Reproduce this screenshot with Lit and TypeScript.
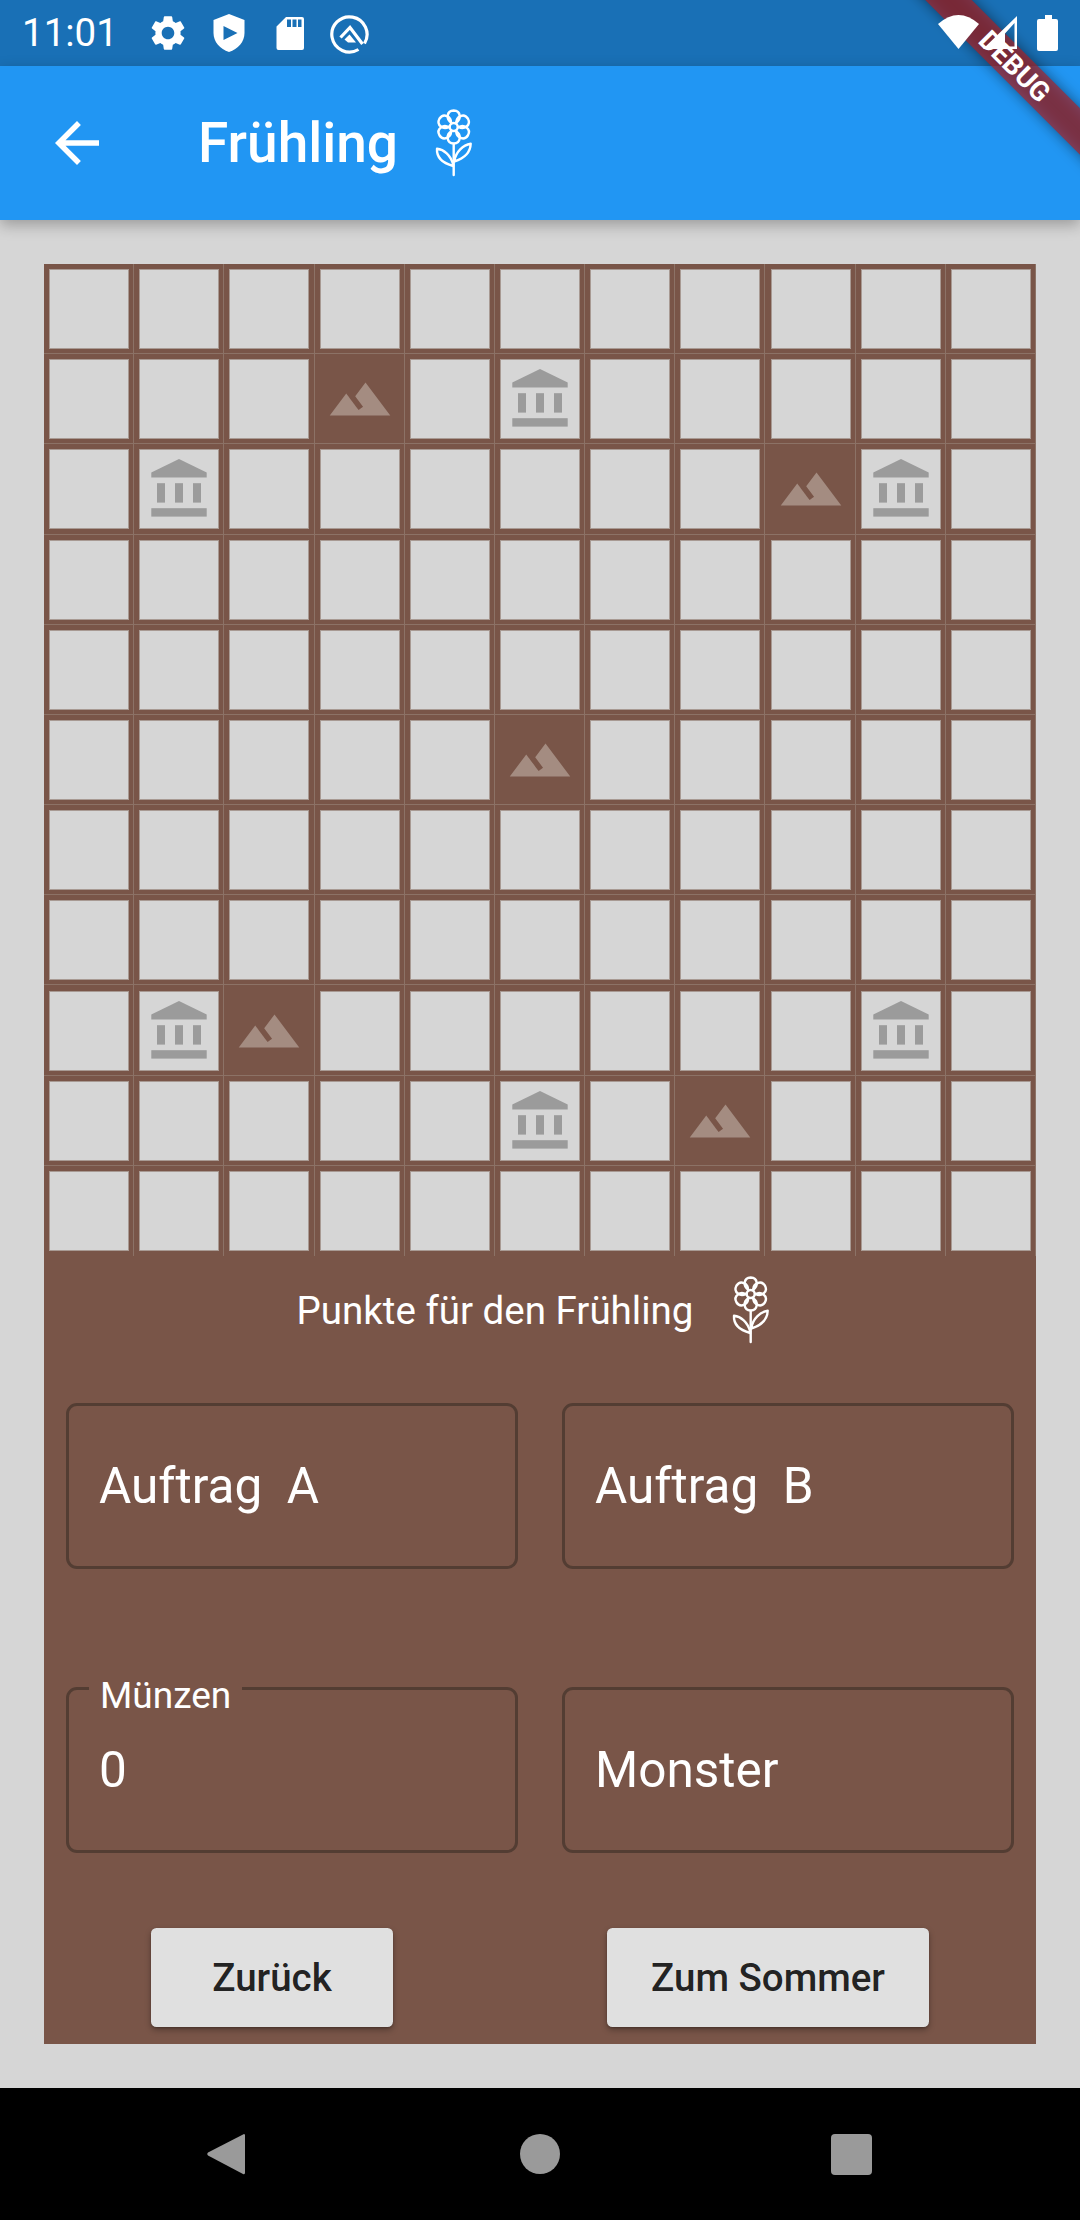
import { LitElement, html, css, svg } from "lit";
import { customElement } from "lit/decorators.js";

const SIZE = 11;
// row,col of the special tiles
const MOUNTAINS = ["1,3", "2,8", "5,5", "8,2", "9,7"];
const RUINS = ["1,5", "2,1", "2,9", "8,1", "8,9", "9,5"];

const flower = html`<svg class="flower" viewBox="0 0 70 85" width="70" height="85" fill="none" stroke="#fff" stroke-width="2.4" stroke-linecap="round" stroke-linejoin="round">
  <g transform="translate(33.7 26)">
    ${[0, 60, 120, 180, 240, 300].map(
      (a) => svg`<path transform="rotate(${a})" d="M-2.2 -4.4C-7.6 -7 -7.6 -16.2 0 -16.5C7.6 -16.2 7.6 -7 2.2 -4.4" />`
    )}
    <circle r="4" />
  </g>
  <path d="M33.7 43V74" />
  <path d="M33.2 63.5C30.5 54 24 48.5 17 47.8C16.5 56 22 62 33.2 65" />
  <path d="M34.2 60C36 50.5 43 44 50.7 42.8C50.4 51.5 44 57.5 34.2 60.5" />
</svg>`;

const mountain = html`<svg viewBox="0 0 24 24" width="66" height="66"><path fill="#a48c81" d="M14 6l-3.75 5 2.85 3.8-1.6 1.2C9.81 13.75 7 10 7 10l-6 8h22L14 6z" /></svg>`;

const bank = html`<svg viewBox="0 0 66 66" width="66" height="66" fill="#9b9b9b">
  <path d="M33 2.9L60.7 16.5V21.5H5.3V16.5Z" />
  <rect x="11" y="27.2" width="8" height="19.4" />
  <rect x="29" y="27.2" width="8" height="19.4" />
  <rect x="47" y="27.2" width="8" height="19.4" />
  <rect x="5.3" y="52.2" width="55.4" height="8.4" />
</svg>`;

@customElement("app-root")
export class AppRoot extends LitElement {
  static styles = css`
    :host {
      display: block;
      font-family: Roboto, sans-serif;
    }
    .screen {
      position: relative;
      width: 1080px;
      height: 2220px;
      overflow: hidden;
      display: flex;
      flex-direction: column;
      background: #d6d6d6;
    }
    .status {
      height: 66px;
      flex: none;
      background: #1970b6;
      display: flex;
      align-items: center;
      color: #fff;
      padding-left: 22px;
    }
    /* system icons sit on top of the debug banner */
    .time,
    .status-icons,
    .status-right {
      position: relative;
      z-index: 4;
    }
    .time {
      font-size: 38.5px;
      width: 125px;
      line-height: 66px;
    }
    .status-icons {
      display: flex;
      gap: 19px;
    }
    .status-icons svg {
      display: block;
    }
    .status-right {
      margin-left: auto;
      margin-right: 16px;
      display: block;
    }
    .appbar {
      height: 154px;
      flex: none;
      background: #2196f3;
      display: flex;
      align-items: center;
      padding-left: 44px;
      color: #fff;
      position: relative;
      z-index: 1;
      box-shadow: 0 5px 14px rgba(0, 0, 0, 0.28);
    }
    .appbar .back {
      margin-right: 88px;
    }
    .title {
      font-size: 55px;
      font-weight: 500;
      margin-right: 22px;
    }
    .body {
      flex: 1;
      padding: 44px 44px 0;
    }
    .board {
      background: #795548;
      height: 1780px;
      display: flex;
      flex-direction: column;
    }
    .grid {
      display: grid;
      grid-template-columns: repeat(11, 1fr);
      grid-template-rows: repeat(11, 1fr);
      height: 992px;
      flex: none;
    }
    .cell {
      display: flex;
      align-items: center;
      justify-content: center;
      box-shadow: inset -1px -1px 0 #8c7266;
    }
    .cell.last-row {
      box-shadow: inset -1px 0 0 #8c7266;
    }
    .tile {
      width: 80px;
      height: 80px;
      box-sizing: border-box;
      display: flex;
      align-items: center;
      justify-content: center;
    }
    .tile.open {
      background: #d6d6d6;
      border: 1px solid #a89a93;
    }
    .score-head {
      height: 109px;
      flex: none;
      display: flex;
      align-items: center;
      justify-content: center;
      gap: 24px;
      padding-left: 4px;
      color: #fff;
      font-size: 38.5px;
    }
    .fields {
      display: grid;
      grid-template-columns: 1fr 1fr;
      column-gap: 44px;
      row-gap: 118px;
      padding: 38px 22px 0;
    }
    .field {
      position: relative;
      height: 166px;
      box-sizing: border-box;
      border: 3px solid #533d33;
      border-radius: 11px;
      padding-left: 30px;
      display: flex;
      align-items: center;
      color: #fff;
      font-size: 49.5px;
      white-space: pre;
    }
    .field label {
      position: absolute;
      left: 20px;
      top: -16px;
      padding: 0 11px;
      background: #795548;
      font-size: 37px;
      line-height: 44px;
    }
    .actions {
      display: flex;
      justify-content: space-around;
      margin-top: 75px;
    }
    button {
      height: 99px;
      min-width: 242px;
      padding: 0 44px;
      border: none;
      border-radius: 5.5px;
      background: #e0e0e0;
      color: rgba(0, 0, 0, 0.87);
      font: 500 38.5px Roboto, sans-serif;
      box-shadow: 0 3px 6px rgba(0, 0, 0, 0.3), 0 1px 2px rgba(0, 0, 0, 0.2);
    }
    .nav {
      height: 132px;
      flex: none;
      background: #000;
      display: flex;
      align-items: center;
      justify-content: center;
      gap: 271px;
    }
    .nav svg {
      display: block;
      margin-left: -3px;
      margin-right: 3px;
    }
    .circle {
      width: 40px;
      height: 40px;
      border-radius: 50%;
      background: #9a9a9a;
    }
    .square {
      width: 41px;
      height: 41px;
      border-radius: 4px;
      background: #9a9a9a;
    }
    /* flutter debug banner */
    .ribbon-shadow,
    .ribbon {
      position: absolute;
      left: 813px;
      top: 48px;
      width: 400px;
      height: 33px;
      box-sizing: border-box;
      transform: rotate(45deg);
      z-index: 3;
    }
    .ribbon-shadow {
      background: rgba(0, 0, 0, 0.45);
      filter: blur(7px);
    }
    .ribbon {
      background: rgba(183, 28, 28, 0.627);
      color: #fff;
      font: 700 27.5px/33px Roboto, sans-serif;
      padding-left: 5px;
      text-align: center;
    }
  `;

  renderCell(r: number, c: number) {
    const key = `${r},${c}`;
    const isMountain = MOUNTAINS.includes(key);
    const isRuin = RUINS.includes(key);
    return html`<div class="cell ${r === SIZE - 1 ? "last-row" : ""}">
      <div class="tile ${isMountain ? "" : "open"}">
        ${isMountain ? mountain : isRuin ? bank : ""}
      </div>
    </div>`;
  }

  render() {
    const rows = [...Array(SIZE).keys()];
    return html`
      <div class="screen">
        <div class="status">
          <div class="time">11:01</div>
          <div class="status-icons">
            <svg viewBox="0 0 24 24" width="42" height="42" fill="#fff"><path d="M19.14 12.94c.04-.3.06-.61.06-.94 0-.32-.02-.64-.07-.94l2.03-1.58c.18-.14.23-.41.12-.61l-1.92-3.32c-.12-.22-.37-.29-.59-.22l-2.39.96c-.5-.38-1.03-.7-1.62-.94l-.36-2.54c-.04-.24-.24-.41-.48-.41h-3.84c-.24 0-.43.17-.47.41l-.36 2.54c-.59.24-1.13.57-1.62.94l-2.39-.96c-.22-.08-.47 0-.59.22L2.74 8.87c-.12.21-.08.47.12.61l2.03 1.58c-.05.3-.09.63-.09.94s.02.64.07.94l-2.03 1.58c-.18.14-.23.41-.12.61l1.92 3.32c.12.22.37.29.59.22l2.39-.96c.5.38 1.03.7 1.62.94l.36 2.54c.05.24.24.41.48.41h3.84c.24 0 .44-.17.47-.41l.36-2.54c.59-.24 1.13-.56 1.62-.94l2.39.96c.22.08.47 0 .59-.22l1.92-3.32c.12-.22.07-.47-.12-.61l-2.01-1.58zM12 15.6c-1.98 0-3.6-1.62-3.6-3.6s1.62-3.6 3.6-3.6 3.6 1.62 3.6 3.6-1.62 3.6-3.6 3.6z" /></svg>
            <svg viewBox="0 0 42 42" width="42" height="42" fill="#fff"><path fill-rule="evenodd" d="M21 2L36.5 8V21C36.5 30 30 37 21 40C12 37 5.5 30 5.5 21V8ZM15.5 14V28L29.5 21Z" /></svg>
            <svg viewBox="0 0 42 42" width="42" height="42" fill="#fff"><path fill-rule="evenodd" d="M17 5H33a2 2 0 0 1 2 2V36a2 2 0 0 1-2 2H9.5a2 2 0 0 1-2-2V14.5ZM18 7.5V15H22V7.5ZM23.5 7.5V15H27.5V7.5ZM29 7.5V15H32.5V7.5Z" /></svg>
            <svg viewBox="0 0 42 42" width="42" height="42" fill="none" stroke="#fff">
              <path stroke-width="3.2" d="M28.5 37.5A17.6 17.6 0 1 1 34.5 31.5" />
              <path stroke-width="3.2" d="M10.5 25.5L20 15.5L32.5 32" />
              <path fill="#fff" stroke="none" d="M14.5 27.5L19.5 22.5L26 30.5H18Z" />
            </svg>
          </div>
          <svg class="status-right" viewBox="930 0 134 66" width="134" height="66" fill="#fff">
            <path d="M938 24Q958.5 6 979 24L958.5 49Z" />
            <path fill-rule="evenodd" d="M1017 16V49H983ZM1014.5 23L1005 33.5V46.5H1014.5Z" />
            <path d="M1045 15h7v4h4a2 2 0 0 1 2 2V49a2 2 0 0 1-2 2H1039a2 2 0 0 1-2-2V21a2 2 0 0 1 2-2h6Z" />
          </svg>
        </div>
        <div class="appbar">
          <svg class="back" viewBox="0 0 24 24" width="66" height="66" fill="#fff"><path d="M20 11H7.83l5.59-5.59L12 4l-8 8 8 8 1.41-1.41L7.83 13H20v-2z" /></svg>
          <div class="title">Frühling</div>
          ${flower}
        </div>
        <div class="body">
          <div class="board">
            <div class="grid">
              ${rows.map((r) => rows.map((c) => this.renderCell(r, c)))}
            </div>
            <div class="score-head"><span>Punkte für den Frühling</span>${flower}</div>
            <div class="fields">
              <div class="field">Auftrag  A</div>
              <div class="field">Auftrag  B</div>
              <div class="field"><label>Münzen</label>0</div>
              <div class="field">Monster</div>
            </div>
            <div class="actions">
              <button>Zurück</button>
              <button>Zum Sommer</button>
            </div>
          </div>
        </div>
        <div class="nav">
          <svg viewBox="0 0 40 44" width="40" height="44"><path fill="#9a9a9a" d="M38 2a1.5 1.5 0 0 1 1 1V41a1.5 1.5 0 0 1-2 1L2 23.5a2 2 0 0 1 0-3Z" /></svg>
          <div class="circle"></div>
          <div class="square"></div>
        </div>
        <div class="ribbon-shadow"></div>
        <div class="ribbon">DEBUG</div>
      </div>
    `;
  }
}
